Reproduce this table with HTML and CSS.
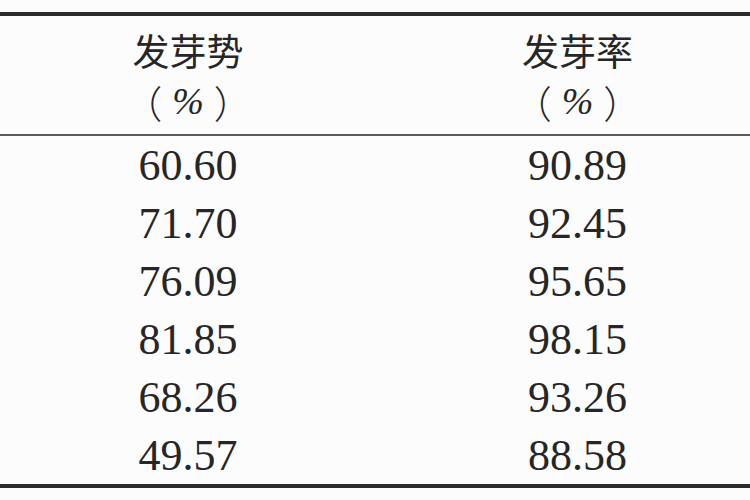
FILE: index.html
```html
<!DOCTYPE html>
<html lang="zh">
<head>
<meta charset="utf-8">
<link rel="stylesheet" href="styles.css">
</head>
<body>
<div class="table">
  <div class="head">
    <div class="cell c1"><span>发芽势</span><span class="unit"><span class="par">（</span><span class="pct">%</span><span class="par">）</span></span></div>
    <div class="cell c2"><span>发芽率</span><span class="unit"><span class="par">（</span><span class="pct">%</span><span class="par">）</span></span></div>
  </div>
  <div class="body">
    <div class="cell c1">60.60</div><div class="cell c2">90.89</div>
    <div class="cell c1">71.70</div><div class="cell c2">92.45</div>
    <div class="cell c1">76.09</div><div class="cell c2">95.65</div>
    <div class="cell c1">81.85</div><div class="cell c2">98.15</div>
    <div class="cell c1">68.26</div><div class="cell c2">93.26</div>
    <div class="cell c1">49.57</div><div class="cell c2">88.58</div>
  </div>
</div>
</body>
</html>
```
FILE: styles.css
```css
html, body {
  margin: 0;
  padding: 0;
  background: #fcfcfc;
  width: 750px;
  height: 500px;
  overflow: hidden;
}
.table {
  margin-top: 12px;
  border-top: 4px solid #2b2b2b;
  border-bottom: 4px solid #2b2b2b;
  color: #262626;
  width: 750px;
}
.head {
  display: grid;
  grid-template-columns: 376px 1fr;
  height: 118px;
  border-bottom: 2px solid #5a5a5a;
}
.head .cell {
  display: flex;
  flex-direction: column;
  align-items: center;
  justify-content: center;
  font-family: "Noto Sans CJK SC", serif;
  font-size: 37px;
  line-height: 51px;
  font-weight: 400;
  padding-top: 2px;
  text-spacing-trim: space-all;
}
.unit {
  display: flex;
  align-items: center;
  font-size: 38px;
}
.par {
  font-family: "Noto Sans CJK SC", sans-serif;
  font-weight: 300;
  font-size: 38px;
  text-spacing-trim: space-all;
}
.pct {
  font-family: "Liberation Serif", serif;
  font-style: italic;
  font-size: 38px;
  margin: 0 10px;
}
.body {
  display: grid;
  grid-template-columns: 376px 1fr;
  grid-auto-rows: 58px;
}
.body .cell {
  display: flex;
  align-items: center;
  justify-content: center;
  font-family: "Liberation Serif", serif;
  font-size: 44px;
}
.c2 {
  padding-left: 29px;
}
```
